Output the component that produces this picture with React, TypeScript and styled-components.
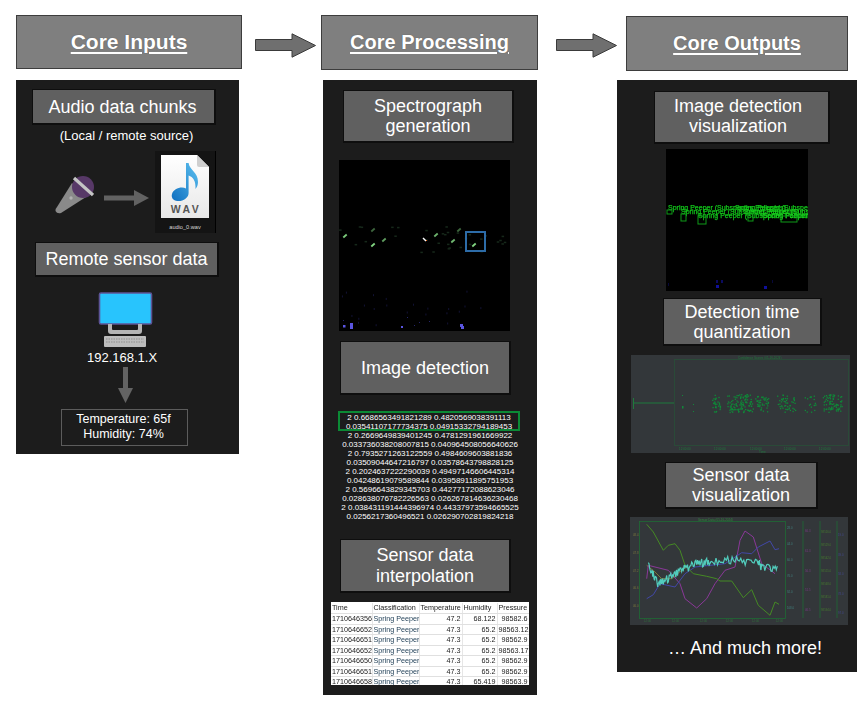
import React from 'react';
import styled, { createGlobalStyle } from 'styled-components';

const Global = createGlobalStyle`
  html, body { margin: 0; padding: 0; background: #fff; }
  body { font-family: "Liberation Sans", Arial, sans-serif; color: #fff; }
`;

const Board = styled.div`
  display: grid;
  grid-template-columns: 226px 79px 217px 79px 240px;
  grid-template-rows: 65px auto;
  align-items: start;
  padding: 15px 0 15px 16px;
  width: 868px;
  height: 710px;
  box-sizing: border-box;
  overflow: hidden;
`;

const Heading = styled.h2<{ $top?: number; $left?: number; $w?: number; $h: number; $size?: number }>`
  box-sizing: border-box;
  margin: ${p => p.$top ?? 0}px 0 0 ${p => p.$left ?? 0}px;
  width: ${p => (p.$w ? `${p.$w}px` : '100%')};
  height: ${p => p.$h}px;
  display: flex;
  align-items: center;
  justify-content: center;
  background: #7f7f7f;
  border: 1px solid #3d3d3d;
  font-size: ${p => p.$size ?? 20}px;
  font-weight: 700;
  color: #fff;
  text-decoration: underline;
  text-underline-offset: 3px;
  text-shadow: 0 0 1px rgba(40, 40, 40, 0.55);
`;

const FlowArrow = styled.svg<{ $left: number }>`
  display: block;
  width: 61px;
  height: 25px;
  margin: 18px 0 0 ${p => p.$left}px;
`;

const Panel = styled.section<{ $w: number; $left?: number; $pad: number }>`
  display: flex;
  flex-direction: column;
  align-items: flex-start;
  box-sizing: border-box;
  width: ${p => p.$w}px;
  margin-left: ${p => p.$left ?? 0}px;
  padding-bottom: ${p => p.$pad}px;
  background: #1c1c1c;
`;

const Sub = styled.div<{ $top: number; $left: number; $w: number; $h: number; $lh?: number; $nudge?: number; $lift?: number }>`
  box-sizing: border-box;
  flex: none;
  width: ${p => p.$w}px;
  height: ${p => p.$h}px;
  margin: ${p => p.$top}px 0 0 ${p => p.$left}px;
  padding-right: ${p => p.$nudge ?? 0}px;
  padding-bottom: ${p => p.$lift ?? 0}px;
  display: flex;
  align-items: center;
  justify-content: center;
  text-align: center;
  background: #606060;
  border: 1px solid #0e0e0e;
  border-width: 1px 2px 2px 1px;
  font-size: 18px;
  line-height: ${p => p.$lh ?? 20}px;
  color: #fff;
`;

const Note = styled.p<{ $top: number; $shift?: number; $size: number }>`
  margin: ${p => p.$top}px 0 0;
  width: 100%;
  box-sizing: border-box;
  padding-right: ${p => p.$shift ?? 0}px;
  text-align: center;
  font-size: ${p => p.$size}px;
  line-height: 16px;
  color: #fff;
`;

const MediaRow = styled.div`
  display: flex;
  align-items: flex-start;
  margin: 7px 0 0 38px;
`;

const Art = styled.svg<{ $top?: number; $left?: number; $w: number; $h: number; $blur?: number }>`
  display: block;
  flex: none;
  width: ${p => p.$w}px;
  height: ${p => p.$h}px;
  margin: ${p => p.$top ?? 0}px 0 0 ${p => p.$left ?? 0}px;
  ${p => (p.$blur ? `filter: blur(${p.$blur}px);` : '')}
`;

const Frame = styled.div<{ $top: number; $left: number; $w: number; $h: number }>`
  flex: none;
  width: ${p => p.$w}px;
  height: ${p => p.$h}px;
  margin: ${p => p.$top}px 0 0 ${p => p.$left}px;
  background: #000;
  overflow: hidden;
`;

const ReadingBox = styled.div`
  box-sizing: border-box;
  width: 127px;
  height: 37px;
  margin: 6px 0 0 45px;
  padding: 0 2px 2px 0;
  display: flex;
  flex-direction: column;
  justify-content: center;
  align-items: center;
  border: 1px solid #5c5c5c;
  font-size: 12.5px;
  line-height: 14.5px;
`;

const Numbers = styled.div`
  width: 100%;
  margin-top: 16px;
  font-size: 8px;
  line-height: 9.05px;
  text-align: center;
  color: #fff;
  white-space: nowrap;
`;

const Hit = styled.div`
  box-sizing: border-box;
  width: 182px;
  height: 20px;
  margin-left: 15px;
  padding-top: 0.5px;
  border: 1px solid #0b8a35;
  outline: 1px solid #0b8a35;
  outline-offset: -2px;
`;

const SheetWrap = styled.div`
  width: 198px;
  height: 83px;
  margin: 9px 0 0 8px;
  padding-top: 1px;
  box-sizing: border-box;
  overflow: hidden;
  background: #fff;
`;

const Sheet = styled.table`
  border-collapse: collapse;
  table-layout: fixed;
  width: 198px;
  font-size: 7.2px;
  line-height: 8px;
  color: #222;
  filter: blur(0.4px);
`;

const HeadCell = styled.th`
  height: 10px;
  padding: 0 1px;
  font-weight: 400;
  text-align: left;
  white-space: nowrap;
  overflow: hidden;
  border-right: 1px solid #e6e6e6;
  border-bottom: 1px solid #e0e0e0;
`;

const Cell = styled.td<{ $num?: boolean; $blue?: boolean }>`
  height: 9.5px;
  padding: 0 1px;
  text-align: ${p => (p.$num ? 'right' : 'left')};
  white-space: nowrap;
  overflow: hidden;
  color: ${p => (p.$blue ? '#1a3a52' : '#222')};
  border-right: 1px solid #e6e6e6;
  border-bottom: 1px solid #e0e0e0;
`;

const More = styled.p`
  margin: 12px 0 0;
  width: 100%;
  box-sizing: border-box;
  padding-left: 16px;
  text-align: center;
  font-size: 18px;
  line-height: 22px;
  color: #fff;
`;

const Stack = styled.div``;

const rng = (seed: number) => {
  let s = seed;
  return () => {
    s = (s * 16807) % 2147483647;
    return (s - 1) / 2147483646;
  };
};

const Mic = () => (
  <Art $w={40} $h={40} $top={24} viewBox="0 0 40 40">
    <path d="M18 8 L32 22 L7 38 Q3 39 1.5 36 Q1 34 3 32 Z" fill="#8a8a8a" />
    <circle cx="29" cy="12" r="11" fill="#573867" />
    <path d="M20 3 L39 20" stroke="#c4c4c4" strokeWidth="3.2" />
    <circle cx="17" cy="23" r="1.7" fill="#b0b0b0" />
  </Art>
);

const SmallArrow = () => (
  <Art $w={45} $h={16} $top={39} $left={10} viewBox="0 0 45 16">
    <path d="M0 5.5H30V0L45 8L30 16V10.5H0Z" fill="#626262" />
  </Art>
);

const WavFile = () => (
  <Art $w={61} $h={82} $left={6} viewBox="0 0 61 82">
    <defs>
      <linearGradient id="noteFill" x1="0" y1="1" x2="1" y2="0">
        <stop offset="0" stopColor="#0f6fc0" />
        <stop offset="1" stopColor="#5cc0ef" />
      </linearGradient>
      <linearGradient id="paperFill" x1="0" y1="0" x2="0" y2="1">
        <stop offset="0" stopColor="#ffffff" />
        <stop offset="1" stopColor="#e8e8e8" />
      </linearGradient>
    </defs>
    <rect width="60" height="82" fill="#141414" />
    <rect x="60" width="1" height="82" fill="#000" />
    <path d="M6 4H42L54 16V67H6Z" fill="url(#paperFill)" />
    <path d="M42 4L54 16H44Q42 16 42 14Z" fill="#cfcfcf" />
    <path d="M31 12H33.6C34.5 19 43 21 43 31C43 34 42 36 40.5 38C41 30 38 26 33.6 24.5V42C33.6 47 28 50.5 22.5 50C18 49.5 16 46.5 17 43C18.5 38 26 35 31 37.5Z" fill="url(#noteFill)" />
    <text x="31" y="62" textAnchor="middle" fontFamily="Liberation Sans, sans-serif" fontWeight="700" fontSize="10.5" letterSpacing="2.4" fill="#555">WAV</text>
    <text x="30" y="78" textAnchor="middle" fontFamily="Liberation Sans, sans-serif" fontSize="5.6" fill="#d8d8d8">audio_0.wav</text>
  </Art>
);

const Monitor = () => (
  <Art $w={55} $h={56} $top={15} $left={82} viewBox="0 0 55 56">
    <rect x="1.5" y="1" width="52" height="31" rx="1.5" fill="#28c4fd" stroke="#5d5496" strokeWidth="1.6" />
    <path d="M10 32H14V37Q14 38 15 38H39Q40 38 40 37V32H44V39Q44 42 41 42H13Q10 42 10 39Z" fill="#b4b4b4" />
    <rect x="6" y="44" width="42" height="11" rx="1" fill="#bdbdbd" />
    <path d="M8 47H46M8 50H46" stroke="#8f8f8f" strokeWidth="1" strokeDasharray="1.5 1" />
  </Art>
);

const DownArrow = () => (
  <Art $w={15} $h={36} $top={1} $left={102} viewBox="0 0 15 36">
    <path d="M5 0H10V21H15L7.5 36L0 21H5Z" fill="#636363" />
  </Art>
);

const Spectrogram = () => {
  const r = rng(77);
  const green: [number, number, number][] = [
    [6, 76, 0.9], [34, 70, 0.45], [34, 85, 0.95], [45, 80, 0.7], [97, 75, 0.8], [114, 81, 0.8], [120, 70, 0.45], [135, 85, 0.95]
  ];
  const faint = Array.from({ length: 34 }, () => [r() * 165, 66 + r() * 26, r()]);
  const blue = [[4, 165, 2.5], [11, 163, 3], [11, 166, 3], [62, 166, 2], [121, 164, 3], [122, 166, 3], [80, 162, 1], [68, 157, 1], [4, 160, 1], [75, 165, 1], [90, 161, 1]];
  const dim = Array.from({ length: 22 }, () => [r() * 150 + 2, 130 + r() * 38]);
  return (
    <Frame $top={17} $left={16} $w={171} $h={171}>
      <Art $w={171} $h={171} viewBox="0 0 171 171" $blur={0.5}>
        <rect width="171" height="171" fill="#000" />
        {faint.map((f, i) => <rect key={i} x={f[0]} y={f[1]} width="2.5" height="1.5" fill="#16281a" />)}
        {dim.map((d, i) => <rect key={i} x={d[0]} y={d[1]} width="1" height="2" fill="#121234" />)}
        {green.map(([x, y, o], i) => (
          <path key={i} d={`M${x - 1.7} ${y + 1.5}L${x + 1.7} ${y - 1.5}`} stroke="#88e088" strokeOpacity={o} strokeWidth="1.8" />
        ))}
        <path d="M84 78L87 81" stroke="#fff" strokeWidth="1.4" />
        <rect x="87" y="80" width="1" height="1" fill="#e06020" />
        {blue.map(([x, y, s], i) => <rect key={i} x={x} y={y} width={s} height={s} fill={s > 1 ? '#5a55e0' : '#25256a'} />)}
      </Art>
    </Frame>
  );
};

const Detection = () => {
  const label = 'Spring Peeper (Subspecies Pallustris)';
  const boxes = [[1, 61, 5, 4], [15, 65, 5, 7], [32, 67, 8, 8], [82, 65, 5, 7], [115, 67, 16, 6]];
  return (
    <Frame $top={5} $left={49} $w={142} $h={142}>
      <Art $w={142} $h={142} viewBox="0 0 142 142" $blur={0.3}>
        <rect width="142" height="142" fill="#000" />
        <g fontFamily="Liberation Sans, sans-serif" fontSize="7" fill="#12c21a" stroke="#12c21a" strokeWidth="0.25">
          <text x="2" y="60.5">{label}</text>
          <text x="69" y="60.5">{label}</text>
          <text x="15" y="65">{label}</text>
          <text x="78" y="65" fill="#20e020">{label}</text>
          <text x="32" y="68.5">{label}</text>
          <text x="97" y="68.5" fill="#20e020">{label}</text>
        </g>
        {boxes.map(([x, y, w, h], i) => <rect key={i} x={x} y={y} width={w} height={h} fill="none" stroke="#0f9a18" strokeWidth="1" />)}
        <g fill="#10109a">
          <rect x="50" y="131" width="2" height="3" fill="#0a0a60" />
          <rect x="55" y="131" width="2" height="3" fill="#0a0a60" />
          <rect x="50" y="136" width="3" height="3" />
          <rect x="98" y="137" width="3" height="3" />
          <rect x="2" y="134" width="1" height="3" fill="#07073a" />
          <rect x="106" y="131" width="1" height="3" fill="#07073a" />
        </g>
      </Art>
    </Frame>
  );
};

const Quantized = () => {
  const r = rng(1234);
  const clusters = [[81, 89, 30], [96, 122, 85], [108, 120, 26], [124, 137, 42], [146, 164, 48], [172, 185, 18], [191, 211, 72]];
  const pts: number[][] = [];
  clusters.forEach(([a, b, n]) => {
    for (let i = 0; i < n; i++) pts.push([a + r() * (b - a), 39 + r() * 18]);
  });
  const ticks = [48, 83, 119, 153, 188];
  return (
    <Frame $top={9} $left={14} $w={219} $h={98}>
      <Art $w={219} $h={98} viewBox="0 0 219 98" $blur={0.35}>
        <rect width="219" height="98" fill="#33373a" />
        <text x="107" y="4" fontFamily="Liberation Sans, sans-serif" fontSize="3" fill="#1f7a3c">Confidence Scores (05-16-2024)</text>
        <rect x="43.5" y="4.5" width="174" height="86" fill="none" stroke="#2a4a38" strokeWidth="1" />
        <path d="M3 48H43" stroke="#1f7a3c" strokeWidth="1" />
        <path d="M2.5 43V54" stroke="#1f7a3c" strokeWidth="1" />
        {pts.map(([x, y], i) => <rect key={i} x={x} y={y} width="1.3" height="1.3" fill="#0f8a38" />)}
        <rect x="51" y="51" width="1.5" height="2.5" fill="#12873a" />
        <rect x="62" y="49" width="1" height="1" fill="#12873a" />
        <rect x="62" y="56" width="1" height="1" fill="#12873a" />
        <rect x="51" y="40" width="1" height="1" fill="#12873a" />
        <g fontFamily="Liberation Sans, sans-serif" fontSize="3" fill="#1f7a3c">
          {ticks.map(x => <text key={x} x={x} y="94.5">12:00:00</text>)}
          <text x="128" y="98">Time</text>
        </g>
      </Art>
    </Frame>
  );
};

const toLine = (pts: number[][]) => pts.map(([x, y]) => `${((x - 15) / 3).toFixed(1)},${((y - 20) / 3).toFixed(1)}`).join(' ');

const SensorChart = () => {
  const r = rng(555);
  const greenLine = [[65, 42], [85, 65], [115, 120], [130, 105], [150, 100], [165, 120], [180, 165], [205, 190], [245, 198], [275, 205], [285, 212], [320, 212], [355, 262], [380, 238], [400, 285], [435, 315], [450, 275], [462, 282]];
  const purple = [[65, 205], [70, 165], [90, 170], [130, 180], [165, 220], [180, 265], [215, 293], [245, 265], [270, 220], [300, 180], [330, 170], [345, 90], [360, 62], [385, 80], [410, 160], [450, 190]];
  const blue = [[65, 265], [85, 253], [105, 220], [150, 230], [180, 190], [210, 170], [300, 160], [350, 127], [380, 130], [400, 110], [435, 92], [450, 118], [462, 115]];
  const olive = [[65, 165], [90, 185], [110, 205], [140, 205], [170, 180], [185, 170]];
  const anchors = [[70, 170], [100, 220], [140, 200], [180, 175], [220, 160], [260, 155], [330, 150], [400, 155], [410, 170], [460, 175]];
  const cyan: number[][] = [];
  for (let i = 0; i < anchors.length - 1; i++) {
    const [x0, y0] = anchors[i];
    const [x1, y1] = anchors[i + 1];
    for (let t = 0; t < 16; t++) {
      const f = t / 16;
      cyan.push([x0 + (x1 - x0) * f, y0 + (y1 - y0) * f + (r() - 0.5) * 26]);
    }
  }
  return (
    <Frame $top={8} $left={13} $w={218} $h={108}>
      <Art $w={218} $h={108} viewBox="0 0 218 108" $blur={0.45}>
        <rect width="218" height="108" fill="#33373a" />
        <text x="68" y="4" fontFamily="Liberation Sans, sans-serif" fontSize="3" fill="#2f8a3c">Sensor Data (05-16-2024)</text>
        <rect x="9.5" y="4.5" width="146" height="97" fill="none" stroke="#1f6b35" strokeWidth="0.8" />
        <path d="M173 4V101M190 4V101M207 4V101" stroke="#1f6b35" strokeWidth="0.8" />
        <polyline points={toLine(olive)} fill="none" stroke="#8f8a38" strokeWidth="0.8" />
        <polyline points={toLine(purple)} fill="none" stroke="#8a3798" strokeWidth="1" />
        <polyline points={toLine(blue)} fill="none" stroke="#4248a8" strokeWidth="1" />
        <polyline points={toLine(greenLine)} fill="none" stroke="#458a24" strokeWidth="1" />
        <polyline points={toLine(cyan)} fill="none" stroke="#52cdbd" strokeWidth="1.2" />
        <g fontFamily="Liberation Sans, sans-serif" fontSize="2.8" opacity="0.65">
          <g fill="#a09a40">
            {[19, 37, 55, 72, 90].map(y => <text key={y} x="3" y={y}>{(49 - y / 30).toFixed(1)}</text>)}
          </g>
          <g fill="#4aa8a0">
            {[12, 28, 44, 60, 76, 92].map(y => <text key={y} x="157" y={y}>{(16 + y).toString()}.0</text>)}
          </g>
          <g fill="#9a3fa8">
            {[15, 35, 55, 74, 94].map(y => <text key={y} x="175" y={y}>{(70 - y / 4).toFixed(1)}</text>)}
          </g>
          <g fill="#4f9a2a">
            {[16, 29, 42, 55, 68, 81, 94].map(y => <text key={y} x="191" y={y}>98{500 + y}.0</text>)}
          </g>
          <g fill="#4a50b8">
            {[19, 39, 58, 78, 97].map(y => <text key={y} x="208" y={y}>{y}.0</text>)}
          </g>
          <g fill="#2f8a3c">
            {[14, 42, 70, 96, 122, 146].map(x => <text key={x} x={x} y="105">12:00</text>)}
          </g>
        </g>
      </Art>
    </Frame>
  );
};

const DetectionBox = styled.span`
  position: absolute;
  left: 127px;
  top: 72px;
  width: 19px;
  height: 19px;
  box-sizing: border-box;
  border: 1px solid #2d6ca8;
  outline: 0.5px solid #2d6ca8;
`;

const SpecWrap = styled.div`
  position: relative;
  flex: none;
  margin: 17px 0 0 16px;
  & > div { margin: 0; }
`;

const hits = [
  ['2 0.6686563491821289 0.4820569038391113', '0.03541107177734375 0.04915332794189453']
];
const lines = [
  '2 0.2669649839401245 0.4781291961669922',
  '0.033736038208007815 0.040964508056640626',
  '2 0.7935271263122559 0.4984609603881836',
  '0.03509044647216797 0.03578643798828125',
  '2 0.2024637222290039 0.49497146606445314',
  '0.04248619079589844 0.03958911895751953',
  '2 0.5696643829345703 0.44277172088623046',
  '0.028638076782226563 0.026267814636230468',
  '2 0.038431191444396974 0.44337973594665525',
  '0.0256217360496521 0.026290702819824218'
];

const rows = [
  ['1710646356', '47.2', '68.122', '98582.6'],
  ['1710646652', '47.3', '65.2', '98563.12'],
  ['1710646651', '47.3', '65.2', '98562.9'],
  ['1710646652', '47.3', '65.2', '98563.17'],
  ['1710646650', '47.3', '65.2', '98562.9'],
  ['1710646651', '47.3', '65.2', '98562.9'],
  ['1710646658', '47.3', '65.419', '98563.9']
];

const Arrow = ({ left }: { left: number }) => (
  <FlowArrow $left={left} viewBox="0 0 61 25">
    <path d="M0.5 6.5H37V0.8L60.5 12.5L37 24.2V17.5H0.5Z" fill="#6f6f6f" stroke="#3a3a3a" strokeWidth="1" />
  </FlowArrow>
);

export default function App() {
  return (
    <>
      <Global />
      <Board>
        <Heading $h={54} $size={21}>Core Inputs</Heading>
        <Arrow left={13} />
        <Heading $h={55}>Core Processing</Heading>
        <Arrow left={18} />
        <Heading $h={55} $top={1} $left={9} $w={222}>Core Outputs</Heading>

        <Panel $w={223} $pad={8}>
          <Sub $top={9} $left={16} $w={184} $h={36} $nudge={2}>Audio data chunks</Sub>
          <Note $top={3} $shift={2} $size={13}>(Local / remote source)</Note>
          <MediaRow>
            <Mic />
            <SmallArrow />
            <WavFile />
          </MediaRow>
          <Sub $top={9} $left={19} $w={184} $h={35} $lift={1}>Remote sensor data</Sub>
          <Monitor />
          <Note $top={2} $shift={11} $size={13}>192.168.1.X</Note>
          <DownArrow />
          <ReadingBox>
            <span>Temperature: 65f</span>
            <span>Humidity: 74%</span>
          </ReadingBox>
        </Panel>

        <Stack />

        <Panel $w={214} $left={2} $pad={10}>
          <Sub $top={10} $left={20} $w={171} $h={53}>Spectrograph<br />generation</Sub>
          <SpecWrap>
            <Spectrogram />
            <DetectionBox />
          </SpecWrap>
          <Sub $top={10} $left={17} $w={171} $h={54}>Image detection</Sub>
          <Numbers>
            {hits.map(h => (
              <Hit key={h[0]}>
                {h.map(t => <div key={t}>{t}</div>)}
              </Hit>
            ))}
            {lines.map(t => <div key={t}>{t}</div>)}
          </Numbers>
          <Sub $top={18} $left={17} $w={171} $h={54} $lh={21}>Sensor data<br />interpolation</Sub>
          <SheetWrap>
            <Sheet>
              <colgroup>
                <col width="41" />
                <col width="47" />
                <col width="43" />
                <col width="35" />
                <col width="32" />
              </colgroup>
              <thead>
                <tr>
                  <HeadCell>Time</HeadCell>
                  <HeadCell>Classification</HeadCell>
                  <HeadCell>Temperature</HeadCell>
                  <HeadCell>Humidity</HeadCell>
                  <HeadCell>Pressure</HeadCell>
                </tr>
              </thead>
              <tbody>
                {rows.map((row, i) => (
                  <tr key={i}>
                    <Cell>{row[0]}</Cell>
                    <Cell $blue>Spring Peeper</Cell>
                    <Cell $num>{row[1]}</Cell>
                    <Cell $num>{row[2]}</Cell>
                    <Cell $num>{row[3]}</Cell>
                  </tr>
                ))}
              </tbody>
            </Sheet>
          </SheetWrap>
        </Panel>

        <Stack />

        <Panel $w={240} $pad={13}>
          <Sub $top={11} $left={37} $w={176} $h={53} $nudge={7} $lift={2}>Image detection<br />visualization</Sub>
          <Detection />
          <Sub $top={7} $left={46} $w={159} $h={48}>Detection time<br />quantization</Sub>
          <Quantized />
          <Sub $top={9} $left={48} $w={153} $h={47}>Sensor data<br />visualization</Sub>
          <SensorChart />
          <More>… And much more!</More>
        </Panel>
      </Board>
    </>
  );
}
